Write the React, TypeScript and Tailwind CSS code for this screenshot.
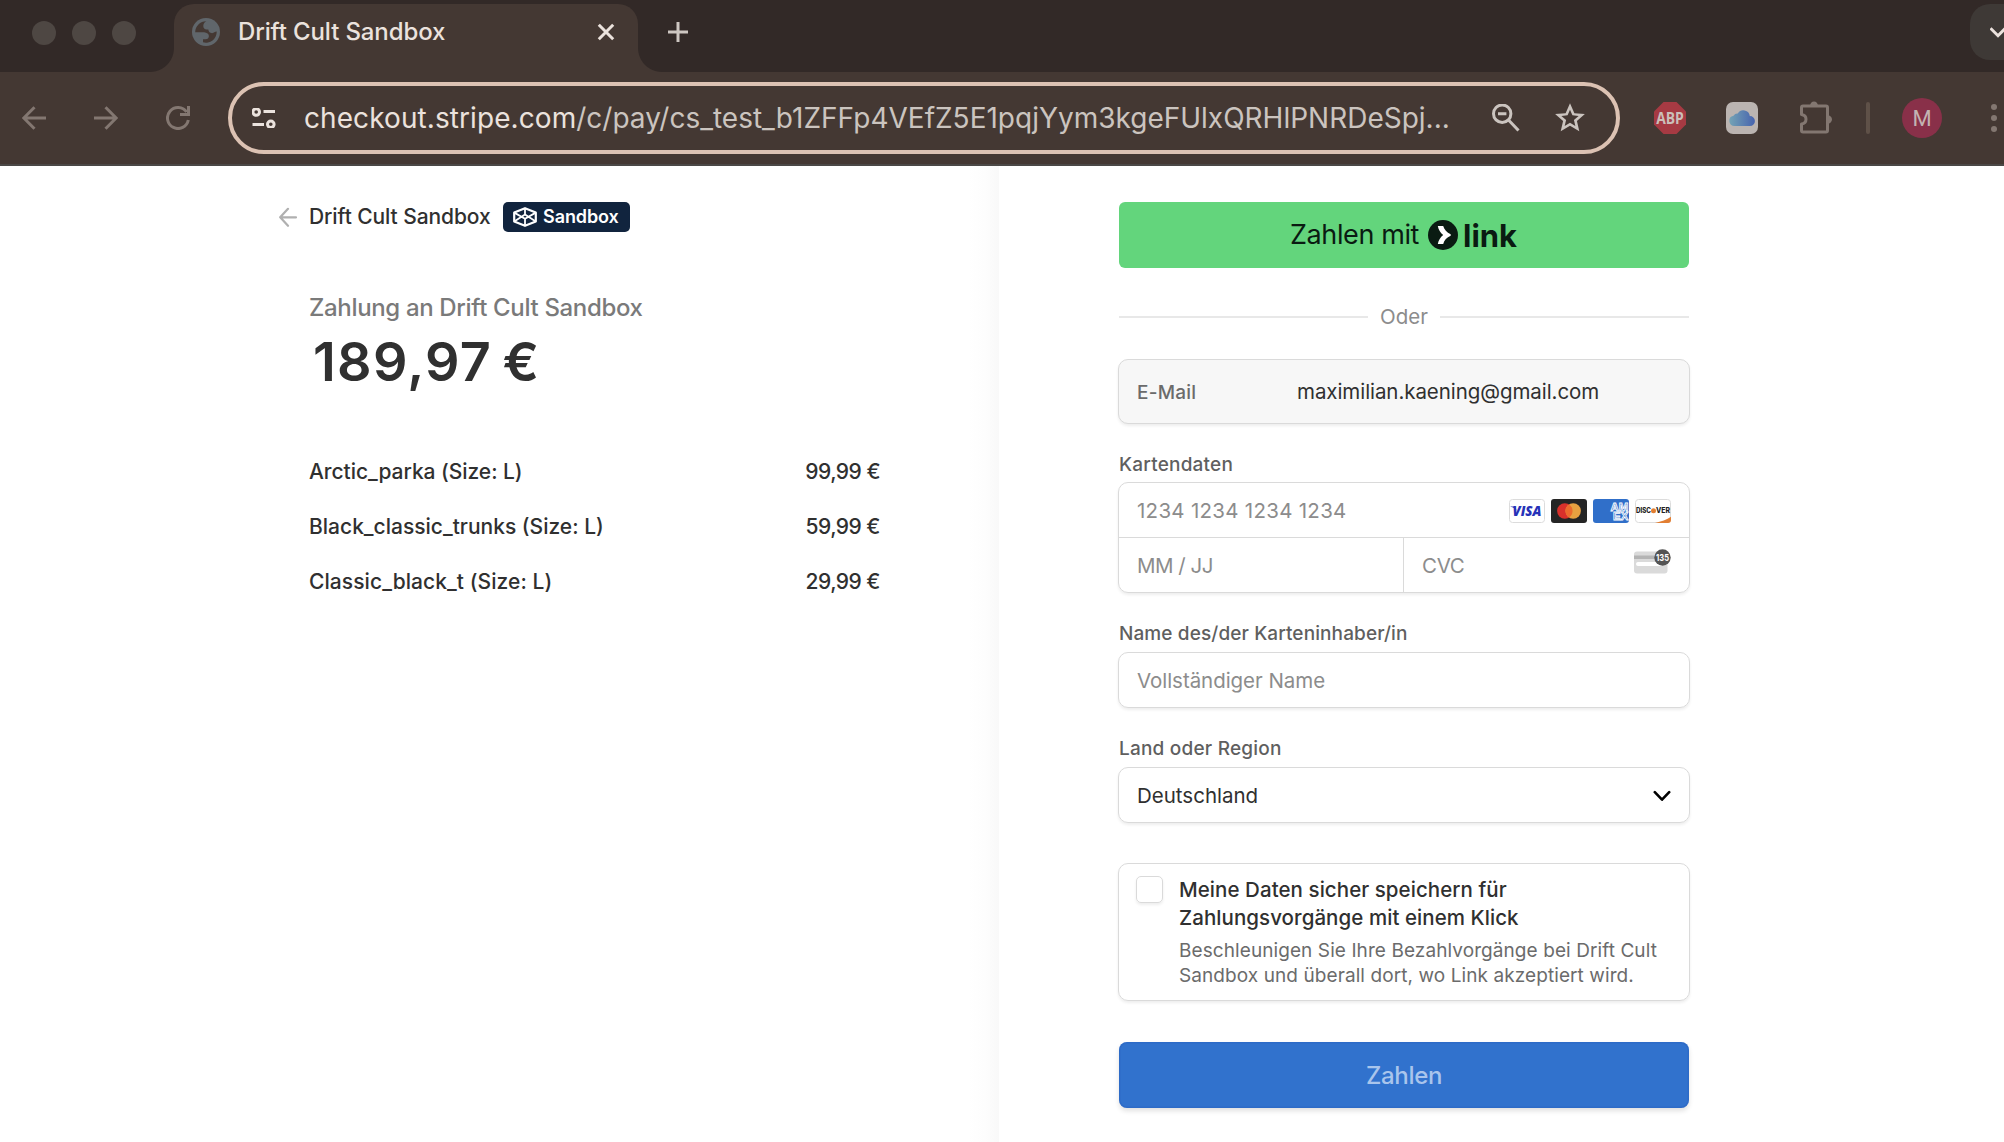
import type { ReactNode } from 'react';

function TabStrip() {
  return (
    <div className="flex h-[72px] items-end bg-[#322927]">
      <div className="flex h-full w-[150px] items-center gap-4 pb-1.5 pl-8">
        <span className="size-6 rounded-full bg-[#4e4743]" />
        <span className="size-6 rounded-full bg-[#4e4743]" />
        <span className="size-6 rounded-full bg-[#4e4743]" />
      </div>
      <div className="size-6 bg-[radial-gradient(circle_at_0_0,transparent_23.5px,#443833_24.5px)]" />
      <div className="flex h-[68px] w-[464px] items-center rounded-t-[20px] bg-[#443833] pr-[22px] pb-3 pl-[18px]">
        <svg className="size-7" viewBox="0 0 28 28">
          <circle cx="14" cy="14" r="14" fill="#60666b" />
          <path
            d="M3.2 14.2A11 11 0 0 1 14.2 3.2C12 4.6 11.3 6 11.3 8c0 2.2 1.3 3.6 3.4 3.6h1.6c.3 2.2 1.6 3.6 3.8 3.6 1.9 0 2.6-1.5 4.6-1.6A10.8 10.8 0 0 1 11 24.3v-3h2.5c2.2 0 3.4-1.3 3.4-3.3 0-2.2-2-3.4-4.8-3.8z"
            fill="#443833"
          />
        </svg>
        <span className="ml-[18px] grow text-[24px] leading-7 font-medium tracking-[-0.117px] text-[#ebe2dd]">Drift Cult Sandbox</span>
        <svg className="size-5" viewBox="0 0 20 20" fill="none" stroke="#ebe2dd" strokeWidth="3">
          <path d="M2.8 2.8l14.4 14.4M17.2 2.8L2.8 17.2" />
        </svg>
      </div>
      <div className="size-6 bg-[radial-gradient(circle_at_100%_0,transparent_23.5px,#443833_24.5px)]" />
      <svg className="mb-[30px] ml-[6px] size-5" viewBox="0 0 20 20" fill="none" stroke="#cdc6c1" strokeWidth="3">
        <path d="M10 0v20M0 10h20" />
      </svg>
      <div className="mb-3 ml-auto flex h-14 w-[34px] items-center rounded-l-[20px] bg-[#3e3936] pl-5">
        <svg className="h-5 w-[14px] overflow-hidden" viewBox="0 0 14 20" fill="none" stroke="#ebe2dd" strokeWidth="3">
          <path d="M0.5 6.2l7.5 7.5 7.5-7.5" />
        </svg>
      </div>
    </div>
  );
}

function Toolbar() {
  return (
    <div className="flex h-[94px] items-center border-b-2 border-[#4b4846] bg-[#443833]">
      <svg className="ml-[22px] size-6" viewBox="0 0 24 24" fill="none" stroke="#837771" strokeWidth="3">
        <path d="M24 12H2.500M12.500 1.200L1.800 12l10.700 10.800" />
      </svg>
      <svg className="ml-12 size-6" viewBox="0 0 24 24" fill="none" stroke="#837771" strokeWidth="3">
        <path d="M0 12h21.500M11.500 1.200L22.200 12 11.500 22.800" />
      </svg>
      <svg className="ml-12 size-6" viewBox="0 0 24 24" fill="none" stroke="#837771" strokeWidth="3">
        <path d="M22.300 14A10.500 10.500 0 1 1 20.600 6M22.500 0v8.500H14" />
      </svg>
      <div className="ml-[38px] flex h-[72px] w-[1392px] items-center rounded-full border-4 border-[#dcc2b3] pl-5">
        <svg className="h-5 w-6" viewBox="0 0 24 20" fill="none" stroke="#ebe2dd" strokeWidth="3">
          <circle cx="4.200" cy="4" r="3.300" />
          <path d="M11.500 3.500H23M0.500 16.500H12" />
          <circle cx="18.800" cy="16.300" r="3.300" />
        </svg>
        <span className="ml-7 w-[1182px] shrink-0 text-[28px] leading-9 whitespace-nowrap text-[#cbc4bf]">
          <span className="tracking-[0.080px] text-[#ebe2dd]">checkout.stripe.com</span>
          /c/pay/cs_test_b1ZFFp4VEfZ5E1pqjYym3kgeFUlxQRHlPNRDeSpj...
        </span>
        <svg className="ml-1.5 size-7 shrink-0" viewBox="0 0 28 28" fill="none" stroke="#cbc4bf" strokeWidth="3">
          <circle cx="10.200" cy="9.700" r="8.700" />
          <path d="M16.500 16l10 10.500M6 9.700h8.400" />
        </svg>
        <svg className="ml-[34px] size-[32px] shrink-0" viewBox="0.700 0.700 22.600 22.600" fill="#cbc4bf">
          <path d="M22.500 9.240l-7.400-.640L12 1.600 8.900 8.610l-7.400.630 5.620 4.870L5.440 21.400 12 17.520l6.560 3.880-1.670-7.290 5.610-4.870zM12 15.400l-3.760 2.270 1-4.280-3.320-2.880 4.380-.380L12 6.100l1.710 4.040 4.380.380-3.320 2.880 1 4.280L12 15.400z" />
        </svg>
      </div>
      <svg className="ml-[34px] size-8" viewBox="0 0 32 32">
        <path d="M9.500 0h13L32 9.500v13L22.500 32h-13L0 22.500v-13z" fill="#a63a43" />
        <text x="2.200" y="21.800" fontFamily="Open Sans, sans-serif" fontSize="16.500" fontWeight="700" fill="#cbbfba" textLength="27.600" lengthAdjust="spacingAndGlyphs">ABP</text>
      </svg>
      <svg className="ml-10 size-8" viewBox="0 0 32 32">
        <defs>
          <linearGradient id="cloud" x1="0" x2="1">
            <stop offset="0" stopColor="#74a3b5" />
            <stop offset="1" stopColor="#4763ae" />
          </linearGradient>
        </defs>
        <rect width="32" height="32" rx="7" fill="#bbb4b1" />
        <path d="M8.500 24a5.200 5.200 0 0 1-1-10.300 4.500 4.500 0 0 1 4.300-2.200A6.500 6.500 0 0 1 23.800 14a5 5 0 0 1 .2 10z" fill="url(#cloud)" />
      </svg>
      <svg className="ml-[42px] h-[34px] w-8" viewBox="0 0 32 34" fill="none">
        <path d="M1.500 13.500V6.500Q1.500 5 3 5h23q1.500 0 1.500 1.500v23q0 1.500-1.500 1.500H3q-1.500 0-1.500-1.500v-6.500c3.200-.500 4.500-2.300 4.500-4.800S4.700 14 1.500 13.500z" stroke="#837771" strokeWidth="3" strokeLinejoin="round" />
        <path d="M10 5a4 4.500 0 0 1 8 0zM27.500 14.300a4.500 4.200 0 0 1 0 8.400z" fill="#837771" />
      </svg>
      <span className="ml-[34px] h-8 w-1 rounded-full bg-[#5f5148]" />
      <span className="ml-8 flex size-10 items-center justify-center rounded-full bg-[#893049] font-[Roboto] text-[22px] text-[#c3b3b2]">M</span>
      <span className="ml-[49px] flex flex-col gap-[5px]">
        <span className="size-1.5 rounded-full bg-[#837771]" />
        <span className="size-1.5 rounded-full bg-[#837771]" />
        <span className="size-1.5 rounded-full bg-[#837771]" />
      </span>
    </div>
  );
}

function Item({ name, price }: { name: ReactNode; price: string }) {
  return (
    <div className="flex h-[55px] items-center justify-between text-[21px] font-medium text-[#303030]">
      {name}
      <span className="tracking-[-0.5px]">{price}</span>
    </div>
  );
}

function Summary() {
  return (
    <section className="w-[999px] bg-[linear-gradient(to_left,#f9f9f9,#fdfdfd_14px,#ffffff_30px)] pt-9 pl-[279px]">
      <div className="flex h-[30px] items-center">
        <svg className="h-5 w-[18px]" viewBox="0 0 18 20" fill="none" stroke="#b0b0b0" strokeWidth="2.200" strokeLinecap="round" strokeLinejoin="round">
          <path d="M17 10.300H1.500M9 1.800L1.200 10.300 9 18.800" />
        </svg>
        <span className="ml-3 w-[194px] text-[21px] font-medium tracking-[-0.090px] whitespace-nowrap text-[#303030]">Drift Cult Sandbox</span>
        <span className="flex h-[30px] w-[127px] items-center rounded-[5px] bg-[#11243e] pl-[10px]">
          <svg className="h-5 w-6" viewBox="0 0 24 20" fill="none" stroke="#fff" strokeLinejoin="round">
            <path d="M12 1.200L22.800 5.600v8.800L12 18.800 1.200 14.400V5.600z" strokeWidth="2.200" />
            <path d="M12 1.200v6M12 12.200v6.500M1.200 5.600L12 11.800l10.800-6.200M1.200 14.400L12 7.600l10.800 6.800" strokeWidth="1.800" />
          </svg>
          <span className="ml-1.5 pb-px text-[18px] font-semibold tracking-[-0.080px] text-white">Sandbox</span>
        </span>
      </div>
      <div className="ml-[30px] w-[571px]">
        <div className="mt-[61px] text-[24px] leading-[30px] font-medium tracking-[-0.340px] text-[#7a7a7a]">Zahlung an Drift Cult Sandbox</div>
        <div className="mt-[9px] ml-1 text-[54px] leading-[60px] font-semibold tracking-[1.240px] [word-spacing:-4.500px] text-[#303030]">189,97 €</div>
        <div className="mt-[52px]">
          <Item name={<span className="tracking-[-0.040px]">Arctic_parka (Size: L)</span>} price="99,99 €" />
          <Item name={<span>Black_classic_trunks (Size: L)</span>} price="59,99 €" />
          <Item name={<span className="tracking-[0.070px]">Classic_black_t (Size: L)</span>} price="29,99 €" />
        </div>
      </div>
    </section>
  );
}

function CardBrands() {
  return (
    <div className="flex gap-1.5">
      <svg className="h-6 w-9" viewBox="0 0 36 24">
        <rect x=".500" y="0.500" width="35" height="23" rx="3" fill="#fff" stroke="#dcdcdc" />
        <text x="3.500" y="17" fontFamily="Open Sans, sans-serif" fontSize="13.500" fontWeight="800" fontStyle="italic" fill="#2632b8" textLength="29" lengthAdjust="spacingAndGlyphs">VISA</text>
        <path d="M1.500 7.400h4.500l2 5C7 10.200 5 8.400 1.500 7.700z" fill="#2632b8" />
      </svg>
      <svg className="h-6 w-9" viewBox="0 0 36 24">
        <rect width="36" height="24" rx="3" fill="#252525" />
        <circle cx="13.800" cy="12" r="7.700" fill="#d9302b" />
        <circle cx="22.200" cy="12" r="7.700" fill="#e8a140" />
        <path d="M18 5.500a7.700 7.700 0 0 1 0 13 7.700 7.700 0 0 1 0-13z" fill="#ec6a2d" />
      </svg>
      <svg className="h-6 w-9" viewBox="0 0 36 24">
        <rect width="36" height="24" rx="3" fill="#306fc9" />
        <g fill="#306fc9" stroke="#fff" strokeWidth="0.800" fontFamily="Liberation Sans, sans-serif" fontSize="11" fontWeight="700">
          <text x="17.500" y="11.800" textLength="17.800" lengthAdjust="spacingAndGlyphs">AM</text>
          <text x="20" y="20.600" textLength="15.300" lengthAdjust="spacingAndGlyphs">EX</text>
        </g>
      </svg>
      <svg className="h-6 w-9" viewBox="0 0 36 24">
        <rect x=".500" y="0.500" width="35" height="23" rx="3" fill="#fff" stroke="#dcdcdc" />
        <path d="M20 24c6-1.200 12-3.500 16-6.200V21a3 3 0 0 1-3 3z" fill="#e27f33" />
        <g fontFamily="Inter, sans-serif" fontSize="7.200" fontWeight="800" fill="#222">
          <text x="1" y="14.400" textLength="15" lengthAdjust="spacingAndGlyphs">DISC</text>
          <text x="21" y="14.400" textLength="14" lengthAdjust="spacingAndGlyphs">VER</text>
        </g>
        <circle cx="18.500" cy="11.800" r="2.500" fill="#e27f33" />
      </svg>
    </div>
  );
}

function CvcIcon() {
  return (
    <svg className="h-7 w-[38px]" viewBox="0 0 38 28">
      <rect x="0" y="2.500" width="33.500" height="22" rx="3" fill="#dadada" />
      <path d="M0 6.500h33.500v3.500H0z" fill="#b4b4b4" />
      <rect x="2" y="13" width="27" height="4" rx="2" fill="#fff" />
      <circle cx="28.500" cy="8.500" r="8.200" fill="#545454" />
      <text x="22" y="12.300" fontFamily="Inter, sans-serif" fontSize="9.500" fontWeight="700" fill="#fff" textLength="13" lengthAdjust="spacingAndGlyphs">135</text>
    </svg>
  );
}

const label = 'mt-[26px] ml-px h-[29px] text-[19px] leading-[29px] font-medium text-[#5f5f5f]';
const box = 'flex rounded-[10px] border border-[#dadada] shadow-[0_2px_3px_rgba(0,0,0,0.07)]';

function Payment() {
  return (
    <section className="w-[572px] pt-9">
      <button className="mx-px flex h-[66px] w-[570px] items-center rounded-md bg-[#63d57c] pl-[170px] text-[#0a1b12]">
        <span className="w-[131px] text-[27px] tracking-[-0.400px] whitespace-nowrap">Zahlen mit</span>
        <svg className="ml-[8px] size-[30px]" viewBox="0 0 30 30">
          <circle cx="15" cy="15" r="15" fill="#0a1b12" />
          <path d="M9.800 6h5.400c1 3.700 3.500 6.500 7.500 8.200v1.600c-4 1.700-6.500 4.500-7.500 8.200H9.800c.7-3.800 2.600-6.800 5.400-9C12.400 12.800 10.500 9.800 9.800 6z" fill="#fff" />
        </svg>
        <svg className="ml-[3px] h-10 w-[60px]" viewBox="0 0 60 40" fill="#0a1b12">
          <text x="2" y="32" fontFamily="Inter, sans-serif" fontSize="31.500" fontWeight="700" textLength="54" lengthAdjust="spacingAndGlyphs">link</text>
        </svg>
      </button>
      <div className="mx-px mt-6 flex h-[50px] items-center">
        <span className="h-0.5 grow bg-[#e8e8e8]" />
        <span className="w-[72px] text-center text-[20.500px] text-[#8c8c8c]">Oder</span>
        <span className="h-0.5 grow bg-[#e8e8e8]" />
      </div>
      <div className={`${box} mt-[17px] h-[65px] items-center bg-[#f7f7f7] pt-0.5 pl-[18px]`}>
        <span className="w-[160px] pt-px text-[19px] font-medium tracking-[0.200px] text-[#6b6b6b]">E-Mail</span>
        <span className="text-[20.500px] tracking-[-0.070px] text-[#303030]">maximilian.kaening@gmail.com</span>
      </div>

      <div className={`${label} tracking-[0.210px]`}>Kartendaten</div>
      <div className={`${box} mt-[3px] h-[111px] flex-col text-[20.500px] text-[#8c8c8c]`}>
        <div className="flex h-[55px] items-center justify-between border-b border-[#dadada] pt-0.5 pr-[18px] pl-[18px]">
          <span className="tracking-[0.280px]">1234 1234 1234 1234</span>
          <CardBrands />
        </div>
        <div className="flex grow">
          <div className="flex w-[285px] items-center border-r border-[#dadada] pt-0.5 pl-[18px] tracking-[-0.500px]">MM / JJ</div>
          <div className="flex grow items-center justify-between pt-0.5 pr-[17px] pl-[18px]">
            <span className="tracking-[-0.300px]">CVC</span>
            <span className="-mt-1.5"><CvcIcon /></span>
          </div>
        </div>
      </div>

      <div className={`${label} tracking-[0.107px]`}>Name des/der Karteninhaber/in</div>
      <div className={`${box} mt-1 h-14 items-center pt-0.5 pl-[18px] text-[20.500px] tracking-[-0.050px] text-[#8c8c8c]`}>Vollständiger Name</div>

      <div className={`${label} tracking-[0.210px]`}>Land oder Region</div>
      <div className={`${box} mt-1 h-14 items-center justify-between pt-0.5 pr-[18px] pl-[18px] text-[20.500px] text-[#303030]`}>
        <span>Deutschland</span>
        <svg className="h-3 w-[18px]" viewBox="0 0 18 12" fill="none" stroke="#000" strokeWidth="2.600" strokeLinecap="round" strokeLinejoin="round">
          <path d="M1.800 2.200L9 9.700l7.200-7.500" />
        </svg>
      </div>

      <div className={`${box} mt-10 h-[138px] pt-3 pl-[17px]`}>
        <span className="h-[27px] w-[27px] shrink-0 rounded-[5px] border border-[#dadada] shadow-[0_2px_3px_rgba(0,0,0,0.07)]" />
        <div className="ml-4">
          <div className="text-[20.500px] leading-7 font-medium tracking-[0.060px] whitespace-nowrap text-[#303030]">
            <div>Meine Daten sicher speichern für</div>
            <div>Zahlungsvorgänge mit einem Klick</div>
          </div>
          <div className="mt-1.5 text-[19px] leading-[25px] tracking-[0.085px] whitespace-nowrap text-[#6b6b6b]">
            <div>Beschleunigen Sie Ihre Bezahlvorgänge bei Drift Cult</div>
            <div>Sandbox und überall dort, wo Link akzeptiert wird.</div>
          </div>
        </div>
      </div>

      <button className="mx-px mt-[41px] h-[66px] w-[570px] rounded-lg bg-[#3172cd] pt-0.5 text-[24px] font-medium tracking-[-0.310px] text-[#a9c5ec] shadow-[inset_0_0_0_1.500px_rgba(40,95,190,0.35),0_3px_5px_rgba(0,0,0,0.12)]">Zahlen</button>
    </section>
  );
}

export default function App() {
  return (
    <div className="flex h-[1142px] w-[2004px] flex-col overflow-hidden bg-white font-[Inter,sans-serif]">
      <TabStrip />
      <Toolbar />
      <main className="flex grow">
        <Summary />
        <div className="pl-[119px]">
          <Payment />
        </div>
      </main>
    </div>
  );
}
